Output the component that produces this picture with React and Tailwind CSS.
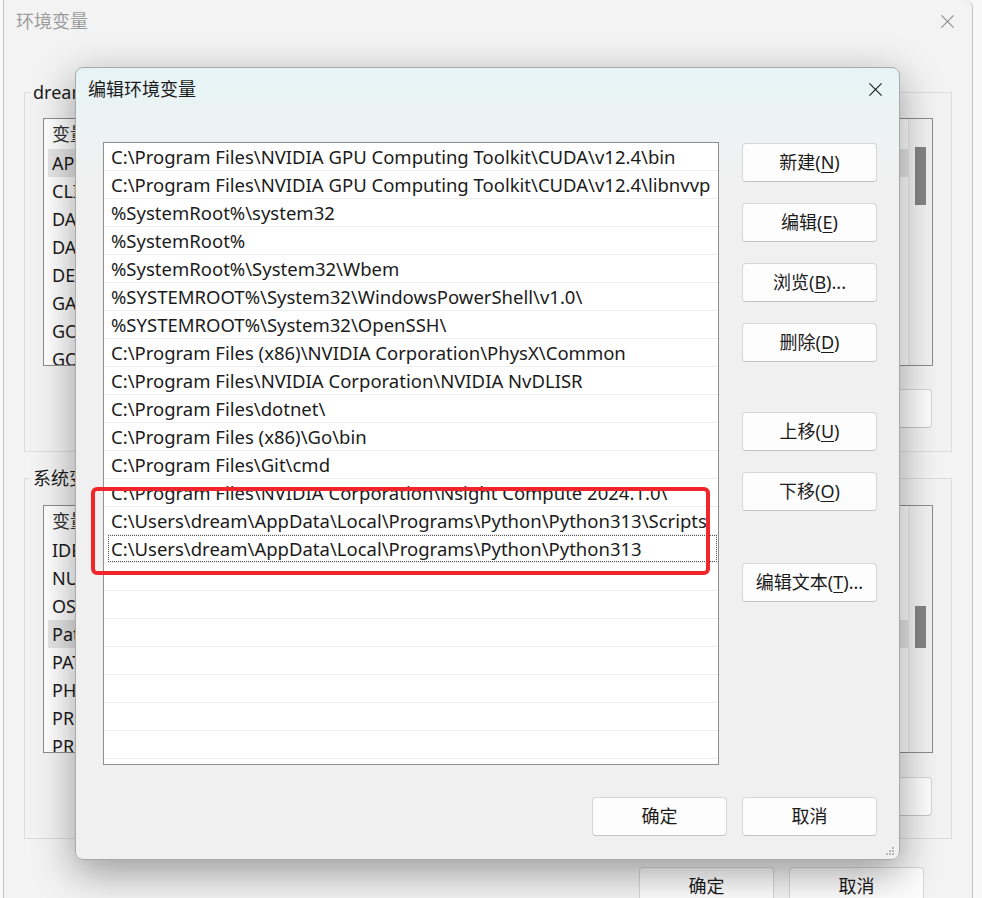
import React from "react";

const paths = [
    "C:\\Program Files\\NVIDIA GPU Computing Toolkit\\CUDA\\v12.4\\bin",
    "C:\\Program Files\\NVIDIA GPU Computing Toolkit\\CUDA\\v12.4\\libnvvp",
    "%SystemRoot%\\system32",
    "%SystemRoot%",
    "%SystemRoot%\\System32\\Wbem",
    "%SYSTEMROOT%\\System32\\WindowsPowerShell\\v1.0\\",
    "%SYSTEMROOT%\\System32\\OpenSSH\\",
    "C:\\Program Files (x86)\\NVIDIA Corporation\\PhysX\\Common",
    "C:\\Program Files\\NVIDIA Corporation\\NVIDIA NvDLISR",
    "C:\\Program Files\\dotnet\\",
    "C:\\Program Files (x86)\\Go\\bin",
    "C:\\Program Files\\Git\\cmd",
    "C:\\Program Files\\NVIDIA Corporation\\Nsight Compute 2024.1.0\\",
    "C:\\Users\\dream\\AppData\\Local\\Programs\\Python\\Python313\\Scripts",
    "C:\\Users\\dream\\AppData\\Local\\Programs\\Python\\Python313",
    "", "", "", "", "", "", "", "",
];

const userVars = ["APPDATA", "CLION", "DATAGRIP", "DATASPELL", "DEVECO", "GATEWAY", "GOLAND", "GOPATH"];
const sysVars = ["IDEA", "NUMBER_OF_PROCESSORS", "OS", "Path", "PATHEXT", "PHPSTORM", "PROCESSOR_ARCHITECTURE", "PROCESSOR_IDENTIFIER"];

function CloseIcon({ className }) {
    return (
        <svg viewBox="0 0 16 16" className={className} aria-hidden="true">
            <path d="M1.5 1.5l13 13M14.5 1.5l-13 13" stroke="currentColor" strokeWidth="1.2" fill="none" />
        </svg>
    );
}

function Btn({ children, className = "" }) {
    return (
        <div className={`h-[39px] w-[135px] flex items-center justify-center rounded-[4px] bg-[#fdfdfd] border border-[#d6d6d6] border-b-[#c4c4c4] text-[18px] text-[#1b1b1b] ${className}`}>
            {children}
        </div>
    );
}

function U({ children }) {
    return <span className="underline underline-offset-[3px] decoration-1">{children}</span>;
}

// list inside the inactive window behind the dialog
function VarList({ items, selected, thumbTop, thumbH }) {
    return (
        <div className="mx-[18px] h-[248px] border border-[#8c8c8c] bg-white flex overflow-hidden">
            <div className="flex-1 pl-[4px]">
                <div className="h-[30px] flex items-center pl-[4px] text-[18px] text-[#333]">变量</div>
                {items.map((v, i) => (
                    <div
                        key={v}
                        className={`h-[28px] flex items-center pl-[4px] text-[18px] text-[#1b1b1b] ${i === selected ? "bg-[#e6e6e6]" : ""}`}
                    >
                        {v}
                    </div>
                ))}
            </div>
            <div className="w-[24px] bg-[#f2f2f2] border-l border-[#e6e6e6] flex justify-center">
                <div className={`w-[11px] bg-[#858585] ${thumbTop} ${thumbH}`} />
            </div>
        </div>
    );
}

export default function App() {
    return (
        <div className="relative w-[982px] h-[898px] overflow-hidden bg-[#f8f8f8] font-['Noto_Sans','Noto_Sans_CJK_SC',sans-serif]">
            {/* background window: 环境变量 */}
            <div className="absolute left-[3px] top-0 w-[970px] h-[930px] bg-[#f3f3f3] border-l border-r border-[#c2c2c2] rounded-tr-[8px]">
                <div className="h-[42px] flex items-center justify-between pl-[12px] pr-[17px]">
                    <span className="text-[18px] text-[#9c9c9c]">环境变量</span>
                    <CloseIcon className="w-[15px] h-[15px] text-[#8c8c8c]" />
                </div>

                <div className="relative mt-[50px] ml-[20px] w-[928px] h-[360px] border border-[#dcdcdc]">
                    <span className="absolute left-[5px] top-[-13px] bg-[#f3f3f3] px-[3px] text-[18px] leading-[24px] text-[#1b1b1b]">dream 的用户变量(U)</span>
                    <div className="pt-[25px]">
                        <VarList items={userVars} selected={0} thumbTop="mt-[28px]" thumbH="h-[58px]" />
                        <div className="flex justify-end pr-[19px] mt-[23px]">
                            <Btn>删除(D)</Btn>
                        </div>
                    </div>
                </div>

                <div className="relative mt-[26px] ml-[20px] w-[928px] h-[361px] border border-[#dcdcdc]">
                    <span className="absolute left-[5px] top-[-13px] bg-[#f3f3f3] px-[3px] text-[18px] leading-[24px] text-[#1b1b1b]">系统变量(S)</span>
                    <div className="pt-[26px]">
                        <VarList items={sysVars} selected={3} thumbTop="mt-[100px]" thumbH="h-[42px]" />
                        <div className="flex justify-end pr-[19px] mt-[24px]">
                            <Btn>删除(L)</Btn>
                        </div>
                    </div>
                </div>

                <div className="flex justify-end gap-[15px] pr-[48px] mt-[28px]">
                    <Btn className="w-[134px]">确定</Btn>
                    <Btn className="w-[134px]">取消</Btn>
                </div>
            </div>

            {/* dialog: 编辑环境变量 */}
            <div className="absolute left-[75px] top-[67px] w-[825px] h-[793px] flex flex-col rounded-[8px] border border-[#a9a9a9] bg-[linear-gradient(to_bottom,#e6f4f6_0px,#edf3f3_60px,#f0f0f0_110px)] shadow-[0_12px_40px_rgba(0,0,0,0.38)]">
                <div className="h-[42px] flex items-center justify-between pl-[12px] pr-[16px]">
                    <span className="text-[18px] text-[#1b1b1b]">编辑环境变量</span>
                    <CloseIcon className="w-[15px] h-[15px] text-[#1b1b1b]" />
                </div>

                <div className="flex mt-[32px] pl-[27px]">
                    <div className="w-[616px] h-[623px] border border-[#8f8f8f] bg-white overflow-hidden">
                        {paths.map((p, i) => (
                            <div
                                key={i}
                                className="relative h-[28px] border-b border-[#ededed] pl-[7px] flex items-center whitespace-nowrap overflow-hidden text-[18.5px] text-[#1b1b1b]"
                            >
                                {p}
                                {i === 14 && (
                                    <div className="absolute left-[4px] right-[1px] top-0 bottom-0 border border-dotted border-[#505050]" />
                                )}
                            </div>
                        ))}
                    </div>

                    <div className="ml-[23px] flex flex-col pt-[1px]">
                        <Btn>新建(<U>N</U>)</Btn>
                        <Btn className="mt-[21px]">编辑(<U>E</U>)</Btn>
                        <Btn className="mt-[21px]">浏览(<U>B</U>)...</Btn>
                        <Btn className="mt-[21px]">删除(<U>D</U>)</Btn>
                        <Btn className="mt-[50px]">上移(<U>U</U>)</Btn>
                        <Btn className="mt-[21px]">下移(<U>O</U>)</Btn>
                        <Btn className="mt-[52px]">编辑文本(<U>T</U>)...</Btn>
                    </div>
                </div>

                <div className="flex justify-end gap-[15px] mt-[32px] pr-[22px]">
                    <Btn className="border-[#3d7fcf] border-b-[#3d7fcf]">确定</Btn>
                    <Btn className="w-[134px]">取消</Btn>
                </div>

                {/* resize grip */}
                <svg viewBox="0 0 10 10" className="absolute right-[5px] bottom-[4px] w-[10px] h-[10px]" aria-hidden="true">
                    <rect x="8" y="2" width="2" height="2" fill="#b5b5b5" />
                    <rect x="5" y="5" width="2" height="2" fill="#b5b5b5" />
                    <rect x="8" y="5" width="2" height="2" fill="#b5b5b5" />
                    <rect x="2" y="8" width="2" height="2" fill="#b5b5b5" />
                    <rect x="5" y="8" width="2" height="2" fill="#b5b5b5" />
                    <rect x="8" y="8" width="2" height="2" fill="#b5b5b5" />
                </svg>
            </div>

            {/* red annotation box */}
            <div className="absolute left-[91px] top-[487px] w-[619px] h-[88px] border-[4px] border-[#f2262a] rounded-[6px]" />
        </div>
    );
}
